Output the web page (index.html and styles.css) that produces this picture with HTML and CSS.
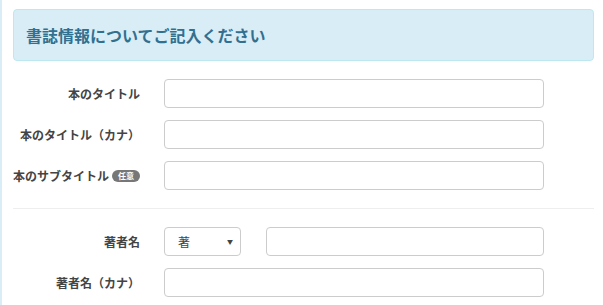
FILE: index.html
```html
<!DOCTYPE html>
<html lang="ja">
<head>
    <meta charset="UTF-8">
    <title>書誌情報</title>
    <link rel="stylesheet" href="styles.css">
</head>
<body>
    <div class="page">
        <div class="panel-heading">書誌情報についてご記入ください</div>
        <form class="book-form">
            <div class="form-row">
                <label class="form-label">本のタイトル</label>
                <input type="text" class="form-input">
            </div>
            <div class="form-row">
                <label class="form-label">本のタイトル（カナ）</label>
                <input type="text" class="form-input">
            </div>
            <div class="form-row">
                <label class="form-label">本のサブタイトル<span class="badge">任意</span></label>
                <input type="text" class="form-input">
            </div>
            <hr class="divider">
            <div class="form-row">
                <label class="form-label">著者名</label>
                <div class="select-box">
                    <span>著</span>
                    <span class="caret">▼</span>
                </div>
                <input type="text" class="form-input author-input">
            </div>
            <div class="form-row">
                <label class="form-label">著者名（カナ）</label>
                <input type="text" class="form-input">
            </div>
        </form>
    </div>
</body>
</html>
```

FILE: styles.css
```css
body {
    margin: 0;
    font-family: "Noto Sans CJK JP", "Noto Sans", sans-serif;
    color: #333;
    background-color: #fff;
}
.page {
    border-left: 2px solid #d9edf7;
    padding: 9px 9px 0 11px;
    height: 296px;
}
.panel-heading {
    background-color: #d9edf7;
    border: 1px solid #bce8f1;
    border-radius: 4px;
    height: 50px;
    line-height: 50px;
    padding: 0 12px;
    color: #31708f;
    font-size: 16px;
    font-weight: bold;
}
.book-form {
    margin-top: 18px;
}
.form-row {
    display: flex;
    align-items: center;
    height: 29px;
    margin-bottom: 12px;
}
.form-label {
    width: 127px;
    margin-right: 24px;
    text-align: right;
    font-size: 12px;
    font-weight: bold;
    color: #444;
    white-space: nowrap;
    display: flex;
    justify-content: flex-end;
    align-items: center;
}
.badge {
    display: inline-block;
    background-color: #777;
    color: #fff;
    font-size: 8px;
    line-height: 12px;
    padding: 0 6px;
    border-radius: 6px;
    margin-left: 3px;
}
.form-input {
    box-sizing: border-box;
    width: 380px;
    height: 29px;
    border: 1px solid #ccc;
    border-radius: 4px;
    padding: 4px 10px;
    margin: 0;
    font-size: 12px;
}
.select-box {
    box-sizing: border-box;
    width: 77px;
    height: 29px;
    border: 1px solid #ccc;
    border-radius: 4px;
    padding: 0 7px 0 13px;
    display: flex;
    justify-content: space-between;
    align-items: center;
    font-size: 12px;
    color: #444;
}
.caret {
    font-size: 6px;
}
.author-input {
    width: 278px;
    margin-left: 25px;
}
.divider {
    border: none;
    border-top: 1px solid #eee;
    margin: 18px 0;
}
```
